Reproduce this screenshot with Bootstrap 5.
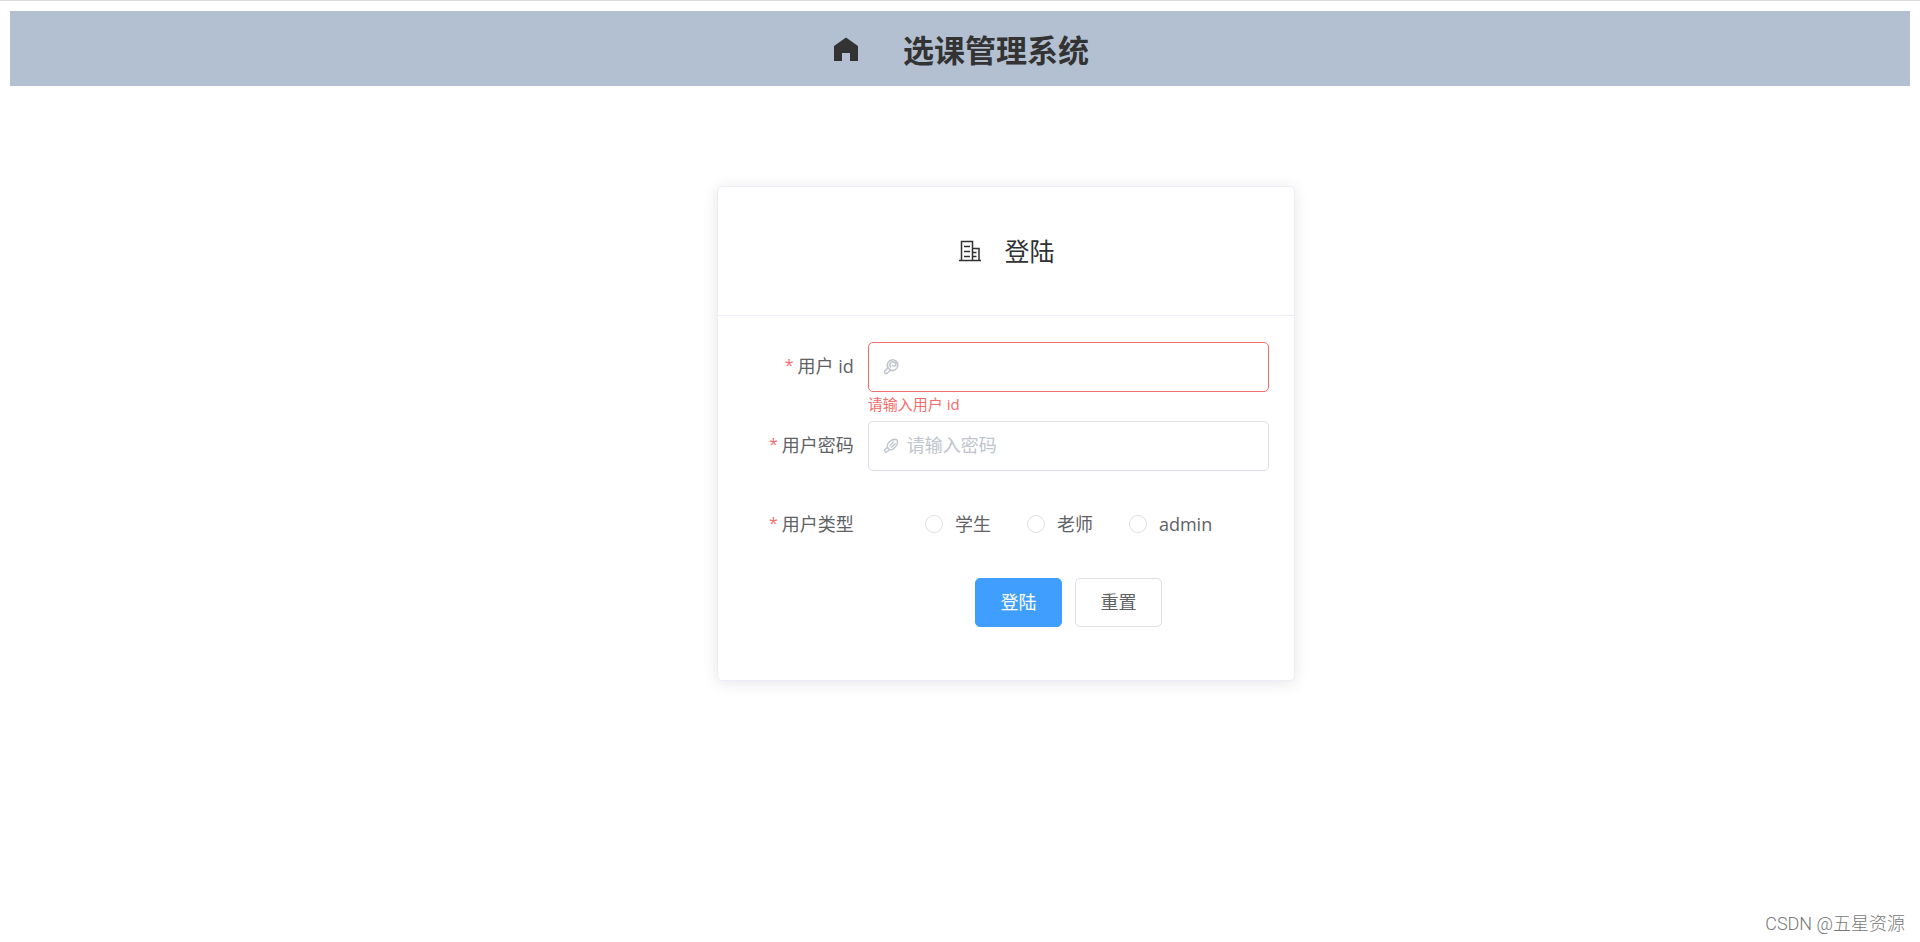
<!DOCTYPE html>
<html lang="zh-CN">
<head>
<meta charset="utf-8">
<meta name="viewport" content="width=device-width, initial-scale=1">
<title>选课管理系统</title>
<link href="https://cdn.jsdelivr.net/npm/bootstrap@5.3.0/dist/css/bootstrap.min.css" rel="stylesheet">
<style>
  body {
    font-family: "Open Sans", "Noto Sans CJK SC", sans-serif;
    font-size: 18px;
    line-height: 24px;
    font-weight: 400;
    color: #606266;
    border-top: 1px solid #dcdcdc;
    padding: 10px;
  }
  .site-header { background: #b3c0d1; color: #333; height: 75px; gap: 42px; }
  .site-header h1 { font-family: "Noto Sans CJK SC", sans-serif; font-size: 31px; line-height: 36px; font-weight: 700; }
  .login-panel {
    width: 30.45%;
    min-width: 540px;
    margin: 100px 0 0 37.2%;
    border: 1px solid #ebeef5;
    border-radius: 5px;
    box-shadow: 0 2px 15px rgba(0, 0, 0, .1);
    --bs-card-color: #606266;
  }
  .panel-head { height: 129px; gap: 22px; border-bottom: 1px solid #ebeef5; color: #303133; }
  .panel-head h2 { font-size: 25px; line-height: 32px; font-weight: 400; }
  .panel-body { padding: 26px 25px 53px; }
  .form-line { display: grid; grid-template-columns: 125px 1fr; margin-bottom: 29px; }
  .form-line > .field-name { line-height: 48px; padding-right: 14px; text-align: right; }
  .field-name::before { content: "*"; color: #f56c6c; font-size: 16px; line-height: 16px; vertical-align: 2px; margin-right: 4px; }
  .field-box {
    height: 50px;
    padding: 0 14px;
    gap: 7px;
    border: 1px solid #dcdfe6;
    border-radius: 5px;
    color: #c0c4cc;
  }
  .field-box input { border: 0; outline: 0; padding: 0 0 2px; color: #606266; background: none; min-width: 0; }
  .field-box input::placeholder { color: #c0c4cc; opacity: 1; }
  .field-box.has-error { border-color: #f56c6c; }
  .field-error { color: #f56c6c; font-size: 15px; line-height: 24px; margin-bottom: -24px; }
  .type-group { gap: 36px; height: 48px; }
  .type-group label { gap: 12px; }
  .type-group .form-check-input { width: 18px; height: 18px; margin: 0; border-color: #dcdfe6; }
  .button-row { gap: 13px; margin-top: 2px; }
  .form-btn { width: 87px; height: 49px; padding: 0 0 1px; font-size: 18px; border-radius: 5px; }
  .btn-login { --bs-btn-bg: #409eff; --bs-btn-border-color: #409eff; --bs-btn-color: #fff; --bs-btn-hover-bg: #66b1ff; --bs-btn-hover-color: #fff; }
  .btn-reset { --bs-btn-bg: #fff; --bs-btn-border-color: #dcdfe6; --bs-btn-color: #606266; --bs-btn-hover-bg: #ecf5ff; --bs-btn-hover-color: #409eff; }
  .credit { color: #777; font-family: Roboto, "Noto Sans CJK SC", sans-serif; font-weight: 300; line-height: 16px; padding-right: 5px; }
</style>
</head>
<body class="d-flex flex-column min-vh-100">
  <header class="site-header d-flex align-items-center justify-content-center">
    <svg width="30" height="30" viewBox="0 0 30 30" fill="currentColor" aria-hidden="true"><path d="M3 27V12L15 3.500l12 8.500v15h-8v-8h-8v8z"/></svg>
    <h1 class="mb-0">选课管理系统</h1>
  </header>

  <main class="card login-panel">
    <div class="panel-head d-flex align-items-center justify-content-center">
      <svg width="25" height="25" viewBox="0 0 25 25" fill="none" stroke="currentColor" stroke-width="1.500" aria-hidden="true"><path d="M1 21.500h22M3.500 21V2.500h11V21M14.500 9.500h6.500V21M6 7.500h6M6 12.500h6M6 17.500h6M15 13.500h3.500M15 17.500h3.500"/></svg>
      <h2 class="mb-0">登陆</h2>
    </div>
    <form class="panel-body" novalidate>
      <div class="form-line">
        <label class="field-name" for="userId">用户 id</label>
        <div>
          <div class="field-box has-error d-flex align-items-center">
            <svg width="17" height="19" viewBox="0 0 17 19" fill="none" stroke="currentColor" stroke-width="1.500" stroke-linecap="round" stroke-linejoin="round" aria-hidden="true"><path d="M5 9.800A5.300 5.300 0 1 1 7.500 12L4 15.300Q1.300 16.500 1.500 13.600L5 9.800L7.500 12M7.700 8.900A3 3 0 1 1 12.700 7.500A2.200 2.200 0 0 1 9.600 7.200"/></svg>
            <input class="flex-grow-1" type="text" id="userId" aria-describedby="userIdError">
          </div>
          <div class="field-error" id="userIdError">请输入用户 id</div>
        </div>
      </div>
      <div class="form-line">
        <label class="field-name" for="password">用户密码</label>
        <div class="field-box d-flex align-items-center">
          <svg width="17" height="19" viewBox="0 0 17 19" fill="none" stroke="currentColor" stroke-width="1.400" stroke-linecap="round" stroke-linejoin="round" aria-hidden="true"><path d="M4.300 10.300C3.500 6.500 8 2.300 12 2.200Q14.700 2.200 14.600 5C14.400 9 10 13.700 6.500 12.700M4.300 10.300L1.700 13Q1.300 14.700 3.300 15.300L6.500 12.700zM7 8.500L10.500 5M8.700 10.200l3.500-3.500"/></svg>
          <input class="flex-grow-1" type="password" id="password" placeholder="请输入密码">
        </div>
      </div>
      <div class="form-line mb-0" role="radiogroup" aria-labelledby="typeName">
        <span class="field-name" id="typeName">用户类型</span>
        <div class="type-group d-flex align-items-center justify-content-center">
          <label class="d-flex align-items-center"><input class="form-check-input" type="radio" name="userType" value="student">学生</label>
          <label class="d-flex align-items-center"><input class="form-check-input" type="radio" name="userType" value="teacher">老师</label>
          <label class="d-flex align-items-center"><input class="form-check-input" type="radio" name="userType" value="admin">admin</label>
        </div>
      </div>
      <div class="form-line mb-0 mt-4 pt-1">
        <span></span>
        <div class="button-row d-flex justify-content-center">
          <button class="btn form-btn btn-login" type="submit">登陆</button>
          <button class="btn form-btn btn-reset" type="reset">重置</button>
        </div>
      </div>
    </form>
  </main>

  <footer class="credit mt-auto text-end">CSDN @五星资源</footer>
<script src="https://cdn.jsdelivr.net/npm/bootstrap@5.3.0/dist/js/bootstrap.bundle.min.js"></script>
</body>
</html>
